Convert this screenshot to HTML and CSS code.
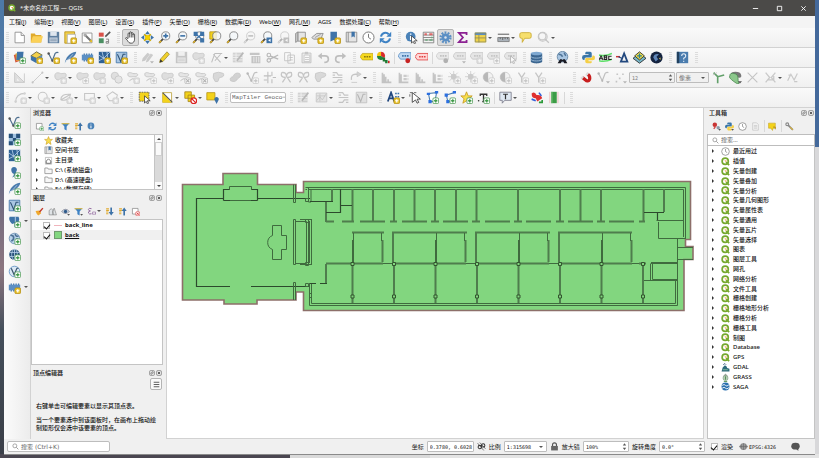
FILE: index.html
```html
<!DOCTYPE html>
<html lang="zh-CN">
<head>
<meta charset="utf-8">
<title>QGIS</title>
<link rel="stylesheet" href="styles.css">
</head>
<body>
<svg class="defs" aria-hidden="true">
  <!-- badges -->
  <symbol id="py" viewBox="0 0 16 16"><rect x="8.500" y="8.500" width="7" height="7" rx="1.500" fill="#e9c22c" stroke="#b58f13"/><path d="M12 10v4M10 12h4" stroke="#fff" stroke-width="1.500"/></symbol>
  <symbol id="pg" viewBox="0 0 16 16"><rect x="8.500" y="8.500" width="7" height="7" rx="1.500" fill="#fff" stroke="#4d9a55"/><path d="M12 10v4M10 12h4" stroke="#3f9a48" stroke-width="1.600"/></symbol>
  <symbol id="xr" viewBox="0 0 16 16"><rect x="8.500" y="8.500" width="7" height="7" rx="1.500" fill="#fff" stroke="#d33"/><path d="M10 10l4 4M14 10l-4 4" stroke="#d22" stroke-width="1.300"/></symbol>
  <symbol id="dd" viewBox="0 0 16 16"><path d="M11 12.500h5l-2.500 3z" fill="#555"/></symbol>
  <!-- project -->
  <symbol id="doc" viewBox="0 0 16 16"><path d="M2.500 1.500h7.500l4 4v9h-11.500z" fill="#fff" stroke="#888"/><path d="M10 1.500v4h4" fill="#eee" stroke="#888"/></symbol>
  <symbol id="folder" viewBox="0 0 16 16"><path d="M1 3h5l1 2h7v9H1z" fill="#e0aa2c"/><path d="M3.500 6.500H16L13.500 14H1z" fill="#fbd157"/></symbol>
  <symbol id="save" viewBox="0 0 16 16"><path d="M1 1h14v14H1z" fill="#5f7f9f"/><path d="M4 1h8v5H4z" fill="#dfe6ee"/><path d="M3 8h10v6H3z" fill="#c9d5e2"/><path d="M4 10h8M4 12h8" stroke="#7b90a6"/></symbol>
  <symbol id="page" viewBox="0 0 16 16"><path d="M1 1h12v14H1z" fill="#f3d04a" stroke="#b58f13"/><path d="M4 4h10v11H4z" fill="#fff" stroke="#aaa"/></symbol>
  <symbol id="mgr" viewBox="0 0 16 16"><path d="M1.500 2.500h12v12h-12z" fill="#fff" stroke="#888"/><path d="M5 5l8 8" stroke="#777" stroke-width="2.500"/><circle cx="5" cy="5" r="2" fill="#aaa"/><path d="M10 13l4 1-1-4z" fill="#e9c22c"/></symbol>
  <symbol id="style" viewBox="0 0 16 16"><path d="M1 2h6v5H1z" fill="#d9534a"/><path d="M1 9h6v6H1z" fill="#4b8f62"/><path d="M9 7l6-6" stroke="#555" stroke-width="2"/><path d="M10 10h3v5h-3v-2h3" stroke="#888" fill="none" stroke-width="1.200"/></symbol>
  <symbol id="hand" viewBox="0 0 16 16"><path d="M5 9V3.500a1 1 0 0 1 2 0V2a1 1 0 0 1 2 0v1a1 1 0 0 1 2 0v1.500a1 1 0 0 1 2 0V10c0 3-1.500 5-4 5S5.500 14 4.500 12L2 9c0-1.300 1.500-1.300 3 .8M7 3.500V8M9 3V8M11 4v4" fill="#fff" stroke="#222" stroke-width=".9"/></symbol>
  <symbol id="pansel" viewBox="0 0 16 16"><path d="M5 5h6v6H5z" fill="#f3d000"/><path d="M8 0l3 4H5zM8 16l3-4H5zM0 8l4-3v6zM16 8l-4-3v6z" fill="#3e73a8"/><path d="M4 4l2 2M12 4l-2 2M4 12l2-2M12 12l-2-2" stroke="#c9a800" stroke-width="2"/></symbol>
  <symbol id="lens" viewBox="0 0 16 16"><path d="M6.500 9.500L1.500 14.500" stroke="#444" stroke-width="2.200"/><path d="M4 12l-2.500 2.500" stroke="#e0b22a" stroke-width="2"/><circle cx="9.500" cy="6" r="5" fill="#f4f7fa" fill-opacity=".8" stroke="#777"/></symbol>
  <symbol id="inc" viewBox="0 0 16 16"><path d="M9.500 3v6M6.500 6h6" stroke="#3e73a8" stroke-width="2"/></symbol>
  <symbol id="dec" viewBox="0 0 16 16"><path d="M6.500 6h6" stroke="#3e73a8" stroke-width="2"/></symbol>
  <symbol id="full" viewBox="0 0 16 16"><path d="M2 1h5v5H2zM10 1h5v5h-5zM10 9h5v5h-5z" fill="#3e73a8"/><path d="M5 4l7 6M12 4L6 9" stroke="#3e73a8" stroke-width="1.500"/></symbol>
  <symbol id="ysq" viewBox="0 0 16 16"><path d="M1 1h8v9H1z" fill="#f3d21a" stroke="#b8961a"/></symbol>
  <symbol id="back" viewBox="0 0 16 16"><path d="M8 8h7v7H8z" fill="#3e73a8"/><path d="M13 9.500L10 11.500l3 2z" fill="#fff"/></symbol>
  <symbol id="map" viewBox="0 0 16 16"><path d="M2 3l3-2v11l-3 2z" fill="#ccc" stroke="#888"/><path d="M5 1.500h9v11H5z" fill="#e5e5e5" stroke="#888"/></symbol>
  <symbol id="map3" viewBox="0 0 16 16"><path d="M1 8l6-5h8l-3 7H3z" fill="#ddd" stroke="#888"/><path d="M5 8l7-4" stroke="#999"/></symbol>
  <symbol id="bm" viewBox="0 0 16 16"><path d="M3 1h8v12l-4-2-4 2z" fill="#3e73a8"/></symbol>
  <symbol id="bms" viewBox="0 0 16 16"><path d="M1.500 1.500h13v12h-13z" fill="#e5e5e5" stroke="#888"/><path d="M4 1.500v12" stroke="#888"/><path d="M8 1h4v7l-2-1.500L8 8z" fill="#3e73a8"/></symbol>
  <symbol id="clock" viewBox="0 0 16 16"><circle cx="8" cy="8" r="6.800" fill="#fff" stroke="#777" stroke-width="1.200"/><path d="M8 3.500V8l3 2" fill="none" stroke="#777" stroke-width="1.200"/></symbol>
  <symbol id="refresh" viewBox="0 0 16 16"><path d="M2.500 7A5.500 5.500 0 0 1 12 4M13.500 9A5.500 5.500 0 0 1 4 12" fill="none" stroke="#3e82c4" stroke-width="2.500"/><path d="M15 1v6H9zM1 15V9h6z" fill="#3e82c4"/></symbol>
  <symbol id="info" viewBox="0 0 16 16"><circle cx="7" cy="7" r="6" fill="#4a82b8"/><path d="M7 6v5M7 3v1.500" stroke="#fff" stroke-width="1.800"/></symbol>
  <symbol id="cur" viewBox="0 0 16 16"><path d="M8 6l7 6h-3.500l1.500 3-1.500.8-1.500-3L8 15z" fill="#fff" stroke="#333" stroke-width=".9"/></symbol>
  <symbol id="abacus" viewBox="0 0 16 16"><path d="M1.500 1.500h13v13h-13zM1.500 5h13M1.500 8h13M1.500 11h13" fill="none" stroke="#777"/><path d="M3 4h3M9 4h4" stroke="#d66" stroke-width="2.400"/><path d="M4 11h3M11 8h2M9 11h4" stroke="#6ba67c" stroke-width="2"/></symbol>
  <symbol id="gear" viewBox="0 0 16 16"><circle cx="8" cy="8" r="6" fill="none" stroke="#5b8fc4" stroke-width="3" stroke-dasharray="2.200 1.570"/><circle cx="8" cy="8" r="4.800" fill="#5b8fc4"/><circle cx="8" cy="8" r="1.500" fill="#dfe6ee"/></symbol>
  <symbol id="sigma" viewBox="0 0 16 16"><path d="M13 5V2.200H3.500L8.500 8l-5 5.800H13V11" fill="none" stroke="#8c2292" stroke-width="2.200"/></symbol>
  <symbol id="table" viewBox="0 0 16 16"><path d="M1 2h14v12H1z" fill="#f0d34a"/><path d="M1 2h14v3H1z" fill="#5b8fc4"/><path d="M1 8.500h14M6 5v9" stroke="#8c8a5a"/><path d="M1.500 2.500h13v11h-13z" fill="none" stroke="#8c8a5a"/></symbol>
  <symbol id="ruler" viewBox="0 0 16 16"><path d="M1 4h14" stroke="#777" stroke-width="1.500"/><path d="M1 8h14v5H1z" fill="#aab2ba" stroke="#777"/><path d="M4 8v2M7 8v3M10 8v2M13 8v2" stroke="#555"/></symbol>
  <symbol id="tip" viewBox="0 0 16 16"><path d="M3 2h10q2 0 2 2v3q0 2-2 2H7l-3 5V9H3Q1 9 1 7V4q0-2 2-2z" fill="#f6df6e" stroke="#c7a72c"/></symbol>
  <!-- data sources -->
  <symbol id="layers" viewBox="0 0 16 16"><path d="M1 5l8-3 2 9-8 3z" fill="#d2553b"/><path d="M3 3l8-1 1 9-8 1z" fill="#e8b53a"/><path d="M5 1h8l-1 10H4z" fill="#3e73a8"/></symbol>
  <symbol id="box" viewBox="0 0 16 16"><path d="M1 6l7-5 7 4-7 4z" fill="#f3d04a" stroke="#5a5a3a"/><path d="M1 6l7 3v6l-7-4z" fill="#3e73a8"/><path d="M8 9l7-4v6l-7 4z" fill="#5b8fc4"/></symbol>
  <symbol id="vec" viewBox="0 0 16 16"><path d="M2 3l4.500 9L10 3q2-2 4-1" fill="none" stroke="#4e6f8f" stroke-width="1.400"/><circle cx="2" cy="3" r="1.500" fill="#555"/><circle cx="6.500" cy="12" r="1.300" fill="#555"/></symbol>
  <symbol id="feather" viewBox="0 0 16 16"><path d="M1 15C2 9 6 2 15 1c0 4-5 9-12 10z" fill="#4a7cae"/><path d="M1 15L11 4" stroke="#d8e4f0" stroke-width=".8"/></symbol>
  <symbol id="chip" viewBox="0 0 16 16"><path d="M4 3v10M7 3v10M10 3v10M13 3v10" stroke="#3e73a8" stroke-width="1.500"/><path d="M1 4.500h14v7H1z" fill="#5b8fc4"/></symbol>
  <symbol id="mesh" viewBox="0 0 16 16"><path d="M1 1h14v14H1z" fill="#2f6296"/><path d="M1 5l6 4 8-8M7 9l2 6M7 9L5 1M1 12l6-3 8 1M11 1l1 9" stroke="#b9d2ea" fill="none"/></symbol>
  <symbol id="vsq" viewBox="0 0 16 16"><path d="M1.500 1.500h13v13h-13z" fill="#a9c6e2" stroke="#3e73a8"/><path d="M3 4l4 9 3-9h3" fill="none" stroke="#2f5376" stroke-width="1.300"/></symbol>
  <symbol id="raster" viewBox="0 0 16 16"><path d="M1 1h14v14H1z" fill="#9fc0e0"/><path d="M1 1h5v5H1zM10 1h5v5h-5zM6 6h4v4H6zM1 10h5v5H1z" fill="#28527c"/></symbol>
  <symbol id="comma" viewBox="0 0 16 16"><path d="M4 4a3.500 3.500 0 1 1 6 3c0 4-2 6-5 7 2-2 2.500-3 2-4.500C5 9 4 7 4 4z" fill="#3e73a8"/></symbol>
  <symbol id="pg-db" viewBox="0 0 16 16"><path d="M2 2h11q2 3 0 7l-2 1v5H8v-5l-3 1Q0 6 2 2z" fill="#3e73a8"/><path d="M9 2v7" stroke="#cfe0f0"/></symbol>
  <symbol id="globe" viewBox="0 0 16 16"><circle cx="8" cy="8" r="6.500" fill="#b9d2ea" stroke="#6b8fb3"/><path d="M3 4q4 0 4 3t-3 4M9 2q0 4 4 3M10 9q3-1 3 3" fill="none" stroke="#4e7397" stroke-width="2"/></symbol>
  <symbol id="globeg" viewBox="0 0 16 16"><circle cx="8" cy="8" r="6.500" fill="#28527c"/><path d="M2 5.500h12M2 10.500h12M8 1.500v13" stroke="#b9d2ea" fill="none"/><ellipse cx="8" cy="8" rx="3.500" ry="6.500" fill="none" stroke="#b9d2ea"/></symbol>
  <symbol id="globev" viewBox="0 0 16 16"><circle cx="8" cy="8" r="6.500" fill="#dce9f5" stroke="#5b8fc4"/><path d="M4 4l3.500 8L11 4h2" fill="none" stroke="#3b556f" stroke-width="1.500"/></symbol>
  <!-- editing -->
  <symbol id="pencil" viewBox="0 0 16 16"><path d="M2 14l1-4 8-9 3 3-8 9z" fill="#f0d02c" stroke="#8a7a2a" stroke-width=".8"/><path d="M2 14l1-4 3 3z" fill="#333"/></symbol>
  <symbol id="pencils" viewBox="0 0 16 16"><path d="M1 13l1-4 6-7 3 2-6 8zM6 14l1-4 5-7 3 2-6 8z" fill="#888"/></symbol>
  <symbol id="blob" viewBox="0 0 16 16"><path d="M1 6c0-5 5-4 7-3s7-2 7 2-4 4-6 4-2 2-4 2-4-2-4-5z" fill="#a5bfa5" stroke="#777"/></symbol>
  <symbol id="blob2" viewBox="0 0 16 16"><path d="M1 4c0-3 4-2 6-1s5-1 6 1-2 3-5 3-7 1-7-3zM3 12q4-4 6-2" fill="#ccc" stroke="#777" stroke-width="1.200"/></symbol>
  <symbol id="blob3" viewBox="0 0 16 16"><path d="M2 3q6-3 12 0 2 4-4 5-2 0-2 3t-4 2Q0 8 2 3z" fill="#aaa" stroke="#777"/></symbol>
  <symbol id="blob4" viewBox="0 0 16 16"><path d="M2 12q-2-4 3-5 2-6 8-4 3 4-2 6-3 6-9 3z" fill="#999" stroke="#777"/></symbol>
  <symbol id="node" viewBox="0 0 16 16"><path d="M2 14L6 3h9M4 4l9 10M13 4L6 12" fill="none" stroke="#666" stroke-width="1.300"/></symbol>
  <symbol id="trim" viewBox="0 0 16 16"><path d="M6 1v14M11 1v5M11 10v5M1 6h9M1 11h4M12 8h4" fill="none" stroke="#666" stroke-width="1.300"/></symbol>
  <symbol id="form" viewBox="0 0 16 16"><path d="M1 2h12v12H1z" fill="#999"/><path d="M1 5h12M1 8h12M1 11h12M5 2v12" stroke="#eee"/><path d="M6 12l8-10" stroke="#555" stroke-width="2"/></symbol>
  <symbol id="trash" viewBox="0 0 16 16"><path d="M1 2h12v3H1zM3 6h11v9H3z" fill="#b66"/><path d="M6 7v7M9 7v7M12 7v7" stroke="#eee"/></symbol>
  <symbol id="cut" viewBox="0 0 16 16"><path d="M5 6l10 4M5 10l10-5" stroke="#555" stroke-width="1.500"/><circle cx="3.500" cy="5" r="2.200" fill="none" stroke="#555" stroke-width="1.400"/><circle cx="3.500" cy="11.500" r="2.200" fill="none" stroke="#555" stroke-width="1.400"/></symbol>
  <symbol id="copy" viewBox="0 0 16 16"><path d="M2 2h7v10H2zM6 5h8v10H6z" fill="#fff" stroke="#666"/><path d="M8 8h4M8 11h4" stroke="#666"/></symbol>
  <symbol id="paste" viewBox="0 0 16 16"><path d="M2.500 2.500h11v12h-11z" fill="#ddd" stroke="#666"/><path d="M5 5h7v8H5z" fill="#fff" stroke="#777"/><path d="M6 1h4v3H6z" fill="#777"/><path d="M6 8h5M6 10.500h5" stroke="#777"/></symbol>
  <symbol id="report" viewBox="0 0 16 16"><path d="M3 1.500h7l3 3v10H3z" fill="#fff" stroke="#555"/><path d="M5 6h6M5 8.500h6M5 11h6" stroke="#555"/></symbol>
  <symbol id="undo" viewBox="0 0 16 16"><path d="M5 6h5q4 0 4 4t-5 4" fill="none" stroke="#666" stroke-width="2"/><path d="M1 6l5-4v8z" fill="#666"/></symbol>
  <symbol id="redo" viewBox="0 0 16 16"><path d="M11 6H6q-4 0-4 4t5 4" fill="none" stroke="#666" stroke-width="2"/><path d="M15 6l-5-4v8z" fill="#666"/></symbol>
  <symbol id="tagy" viewBox="0 0 16 16"><path d="M0 7l3-4h13v8H3z" fill="#f5d81e" stroke="#b99b12" stroke-width=".8"/><path d="M5 7h8" stroke="#8a7610" stroke-width="2" stroke-dasharray="2 1"/></symbol>
  <symbol id="tagb" viewBox="0 0 16 16"><path d="M0 6l3-4h13v8H3z" fill="#bfd8f2" stroke="#5b8fc4"/><path d="M5 6h9" stroke="#3e73a8" stroke-width="2" stroke-dasharray="2 1"/><circle cx="12" cy="12" r="3" fill="#c62222"/></symbol>
  <symbol id="tag" viewBox="0 0 16 16"><path d="M0 6l3-4h13v8H3z" fill="#ccc" stroke="#777"/><path d="M5 6h9" stroke="#777" stroke-width="2" stroke-dasharray="2 1"/></symbol>
  <symbol id="tagr" viewBox="0 0 16 16"><path d="M0 7l3-4h13v8H3z" fill="#ffd5d5" stroke="#e04040"/><path d="M5 7h9" stroke="#e04040" stroke-width="2" stroke-dasharray="2 1"/></symbol>
  <symbol id="pie" viewBox="0 0 16 16"><path d="M0 6a5 5 0 0 1 5-5v5z" fill="#f2c40f"/><path d="M5 1a5 5 0 0 1 4 8L5 6z" fill="#d92b2b"/><path d="M0 6h5l4 3A5 5 0 0 1 0 6z" fill="#25843b"/><path d="M8.500 13V8M11.500 15v-4" stroke="#1e7a32" stroke-width="3"/><path d="M14.500 15v-3" stroke="#c22" stroke-width="2"/></symbol>
  <symbol id="db" viewBox="0 0 16 16"><path d="M1 3v10c0 3 14 3 14 0V3z" fill="#3c6690"/><ellipse cx="8" cy="3" rx="7" ry="2.200" fill="#7fa8d0"/><path d="M1 6.500c0 3 14 3 14 0M1 10c0 3 14 3 14 0" fill="none" stroke="#a9c6e2"/></symbol>
  <symbol id="binoc" viewBox="0 0 16 16"><circle cx="8" cy="7" r="6.500" fill="#a9c6e2" stroke="#5d7f9f"/><path d="M3 4q4 0 5 3M10 2l2 4" stroke="#4e7397" stroke-width="1.800" fill="none"/><path d="M5 10h2l1 1 1-1h2l3 5h-4l-1-2H7l-1 2H2z" fill="#1a1a22"/></symbol>
  <symbol id="python" viewBox="0 0 16 16"><path d="M5 1h5q2 0 2 2v4q0 1-1 1H5q-2 0-2 3H2Q0 11 0 8q0-3 3-3h5V4H4V2z" fill="#3a76a8"/><path d="M11 15H6q-2 0-2-2V9.500q0-1 1-1h6q2 0 2-3h1q2 0 2 3 0 3-3 3H8v1h4v1.500z" fill="#f5cf45"/></symbol>
  <symbol id="label" viewBox="0 0 16 16"><path d="M0 5q8 2 16-2M0 12q8 2 16-2" stroke="#5fe06a" stroke-width="2" fill="none"/><path d="M0 11l2.500-5L5 11M1 9.500h3M6.500 6h3v4.500h-3zM6.500 8.200h3M15.500 6.500H12v4h3.500" stroke="#222" stroke-width="1.300" fill="none"/></symbol>
  <symbol id="adel" viewBox="0 0 16 16"><path d="M6 13l4-10 4 10z" fill="none" stroke="#22487e" stroke-width="2.200"/><path d="M0 7h5" stroke="#c33" stroke-width="1.800"/><path d="M3 7l4 2" stroke="#22487e" stroke-width="1.500"/></symbol>
  <symbol id="diam" viewBox="0 0 16 16"><path d="M0 9l8-6 8 6-8 6z" fill="#79b7c9" stroke="#222"/><path d="M2 6l6-5 6 5-6 5z" fill="#f3e04a" stroke="#222"/><path d="M8 3v6M5 6h6" stroke="#2f7f94" stroke-width="1.600"/></symbol>
  <symbol id="ball" viewBox="0 0 16 16"><circle cx="8" cy="8" r="7.500" fill="#14233f"/><path d="M4 8q1-5 7-4l-3 3 2 3-3 3z" fill="#5f86b8"/><path d="M11 9l2-1v3z" fill="#d8c25a"/></symbol>
  <symbol id="book" viewBox="0 0 16 16"><path d="M1 1h14v14H1z" fill="#4a7cae"/><path d="M1 1h3v14H1z" fill="#22405e"/><path d="M7 6q0-2.500 2.500-2.500T12 6q0 1.500-2.500 3v1.500M9.500 12v1.500" fill="none" stroke="#e4eef8" stroke-width="1.300"/></symbol>
  <!-- advanced digitizing -->
  <symbol id="tri" viewBox="0 0 16 16"><path d="M2 2l12 12H2z" fill="#bbb" stroke="#777"/><path d="M5 9l3 3H5z" fill="#f4f4f4"/><path d="M14 3v11" stroke="#777"/></symbol>
  <symbol id="line" viewBox="0 0 16 16"><path d="M2 14L14 2" stroke="#777"/><circle cx="2" cy="14" r="1.300" fill="#777"/><circle cx="14" cy="2" r="1.300" fill="#777"/></symbol>
  <symbol id="mergec" viewBox="0 0 16 16"><circle cx="6" cy="6" r="4.500" fill="#bbb" stroke="#777"/><circle cx="10.500" cy="10.500" r="4.500" fill="#ccc" stroke="#777"/></symbol>
  <symbol id="loops" viewBox="0 0 16 16"><path d="M2 2q6-1 6 5 0-6 6-5 2 6-5 6l4 6M7 8l-4 6M2 2q-2 6 5 6" fill="none" stroke="#777" stroke-width="1.600"/></symbol>
  <symbol id="rows" viewBox="0 0 16 16"><path d="M2 2h5l2 3h5M2 8h12M2 14h5l2-3h5M2 5h3M11 14h3" fill="none" stroke="#777" stroke-width="1.400"/></symbol>
  <symbol id="rot" viewBox="0 0 16 16"><path d="M11 4H8q-6 0-5 7" fill="none" stroke="#777" stroke-width="1.600"/><path d="M10 1l5 3-5 3zM3 14h7" fill="#999" stroke="#777"/></symbol>
  <symbol id="hist" viewBox="0 0 16 16"><path d="M3 2v12h11M5 4v10M7 7v7M10 10v4" fill="none" stroke="#777" stroke-width="2"/></symbol>
  <symbol id="hista" viewBox="0 0 16 16"><path d="M3 2v12h11M5 4v10" fill="none" stroke="#777" stroke-width="2"/><path d="M8 6h6M8 10h6" stroke="#888" stroke-width="3" stroke-dasharray="4 1"/></symbol>
  <symbol id="sun" viewBox="0 0 16 16"><circle cx="7" cy="7" r="3.500" fill="#998a4a"/><path d="M7 0v14M0 7h14M2 2l10 10M12 2L2 12" stroke="#998a4a"/></symbol>
  <symbol id="half" viewBox="0 0 16 16"><circle cx="7.500" cy="7.500" r="6" fill="#eee" stroke="#777"/><path d="M7.500 1.500a6 6 0 0 0 0 12z" fill="#555"/></symbol>
  <symbol id="why" viewBox="0 0 16 16"><path d="M3 2l4 6 4-6M7 8v6" fill="none" stroke="#777" stroke-width="1.600"/></symbol>
  <symbol id="magnet" viewBox="0 0 16 16"><path d="M3 8l5 4q4 1 4-3t-3-5" fill="none" stroke="#c81e1e" stroke-width="4"/><path d="M1.500 9.500L4 6.500M7.500 5.500L10 2" stroke="#ddd" stroke-width="2.500"/></symbol>
  <symbol id="dots" viewBox="0 0 16 16"><path d="M3 3h2v2H3zM10 3h2v2h-2zM6 8h2v2H6zM2 12h2v2H2z" fill="#777"/></symbol>
  <symbol id="topo" viewBox="0 0 16 16"><path d="M2 2l5 5v8M7 7l8-2" fill="none" stroke="#62a06a" stroke-width="2"/><path d="M1 5l5-3" stroke="#bbb"/></symbol>
  <symbol id="overlap" viewBox="0 0 16 16"><path d="M2 5q0-4 6-4t7 4-4 3-2 5z" fill="#777"/><path d="M1 6q0-4 5-3t5 5 1 7-6-2-5-7z" fill="#8cc88c" stroke="#4d8a52"/></symbol>
  <symbol id="cross" viewBox="0 0 16 16"><path d="M2 2l12 12M14 2L2 14" stroke="#777" stroke-width="1.400"/></symbol>
  <symbol id="bow" viewBox="0 0 16 16"><path d="M2 2l5 6-5 6M14 2L9 8l5 6M4 11h8V6" fill="none" stroke="#8a8470" stroke-width="1.600"/></symbol>
  <symbol id="zig" viewBox="0 0 16 16"><path d="M2 12l4-8 4 7 4-8M3 5h4M10 13h4" fill="none" stroke="#8a8470" stroke-width="1.500"/></symbol>
  <!-- shapes and selection -->
  <symbol id="arc" viewBox="0 0 16 16"><path d="M2 14Q2 3 14 3" fill="none" stroke="#777" stroke-width="1.400"/><circle cx="2" cy="13" r="1.500" fill="#999"/><circle cx="13" cy="3" r="1.500" fill="#999"/></symbol>
  <symbol id="circ" viewBox="0 0 16 16"><circle cx="7" cy="7" r="5.500" fill="#f6f6f6" stroke="#777" stroke-width="1.300"/></symbol>
  <symbol id="ell" viewBox="0 0 16 16"><path d="M1 11q0-8 12-7-1 9-12 7M1 11L13 4" fill="none" stroke="#777" stroke-width="1.300"/></symbol>
  <symbol id="rct" viewBox="0 0 16 16"><path d="M2 3h12v8H2z" fill="none" stroke="#777" stroke-width="1.300"/></symbol>
  <symbol id="poly" viewBox="0 0 16 16"><path d="M8 1l6 4-2 7H4L1 6z" fill="none" stroke="#777" stroke-width="1.300"/></symbol>
  <symbol id="sel" viewBox="0 0 16 16"><path d="M1.500 1.500h12v11h-12z" fill="#f3d21a" stroke="#555" stroke-dasharray="2 1"/></symbol>
  <symbol id="selv" viewBox="0 0 16 16"><path d="M2 2h11v12H2z" fill="#fff" stroke="#bba23a"/><path d="M2 2v12h11z" fill="#f3d21a"/><path d="M2 2l12 12" stroke="#555" stroke-width="1.400"/></symbol>
  <symbol id="desel" viewBox="0 0 16 16"><path d="M1 1h8v8H1zM5 5h8v8H5z" fill="#f3d21a" stroke="#a5841a"/><circle cx="12" cy="12" r="3.500" fill="#fff" stroke="#d22" stroke-width="1.500"/><path d="M9.500 9.500l5 5" stroke="#d22" stroke-width="1.400"/></symbol>
  <symbol id="selloc" viewBox="0 0 16 16"><path d="M1 2h10v9H1z" fill="#f3d21a" stroke="#b8961a"/><path d="M13 16l-2.500-5a2.700 2.700 0 1 1 5 0z" fill="#3e73a8"/></symbol>
  <symbol id="wide" viewBox="0 0 16 16"><path d="M1.500 2.500h13v11h-13z" fill="#ccc" stroke="#777"/><path d="M2 12l4-5 3 4 5-8M2 6h11M6 3v10" fill="none" stroke="#777"/></symbol>
  <symbol id="annoA" viewBox="0 0 16 16"><path d="M1 13L5 2l4 11M2.500 9h5" fill="none" stroke="#22487e" stroke-width="2.200"/><path d="M10 3h6M10 7h5" stroke="#3e73a8" stroke-width="2" stroke-dasharray="2 1"/></symbol>
  <symbol id="sela" viewBox="0 0 16 16"><path d="M1 2h3M6 2h3M1 4v3" stroke="#555"/><path d="M4 2l10 8h-4l2 4-2 1-2-4-4 3z" fill="#fff" stroke="#333"/></symbol>
  <symbol id="apoly" viewBox="0 0 16 16"><path d="M3 3l10-1-2 11-6 0z" fill="#fff" stroke="#4a7cae" stroke-width="1.300"/><path d="M1 2h4v3H1zM11 0h4v3h-4zM3 11h4v4H3z" fill="#2c6fe0"/></symbol>
  <symbol id="aline" viewBox="0 0 16 16"><path d="M14 2L4 5l2 8h6" fill="none" stroke="#4a7cae" stroke-width="1.300"/><path d="M12 0h4v3h-4zM2 3h4v4H2zM4 11h4v4H4z" fill="#2c6fe0"/></symbol>
  <symbol id="star" viewBox="0 0 16 16"><path d="M8 1l2 5h5l-4 3.500 1.500 5.500L8 12l-4.500 3L5 9.500 1 6h5z" fill="#f8de4e" stroke="#c79a1c"/></symbol>
  <symbol id="tee" viewBox="0 0 16 16"><path d="M4 6V4h8v2M8 4v9M6.500 13h3" fill="none" stroke="#333" stroke-width="1.600"/><circle cx="2" cy="12" r="1" fill="#333"/></symbol>
  <symbol id="tbox" viewBox="0 0 16 16"><path d="M1 1.500h14v10H7l-3 3.500v-3.500H1z" fill="#dfe8f2" stroke="#778"/><path d="M5 4h6M8 4v6" stroke="#333" stroke-width="1.500"/></symbol>
  <symbol id="redblue" viewBox="0 0 16 16"><path d="M2 3q4-3 6 2 6-1 7 4l-6 4-2-4q-5 0-5-6z" fill="#e03030"/><path d="M2 10l5 2M11 2l3 4" stroke="#3160d8" stroke-width="2"/><path d="M11 14h4v-3" stroke="#2b9a3a" stroke-width="2" fill="none"/></symbol>
  <symbol id="green" viewBox="0 0 16 16"><path d="M5 1h7v14H5z" fill="#3c9c46"/><path d="M6 1v14" stroke="#8ed08e"/><path d="M3.500 1v14M13.500 1v14" stroke="#e8a0a0" stroke-width=".8"/></symbol>
  <!-- panel tools -->
  <symbol id="sq" viewBox="0 0 16 16"><path d="M2.500 2.500h10v10h-10z" fill="#fff" stroke="#888" stroke-width="1.300"/></symbol>
  <symbol id="funnel" viewBox="0 0 16 16"><path d="M1 2h14l-5 6v7l-4-2V8z" fill="#3e82c4"/><path d="M1 2h14v2H1z" fill="#d9b84a"/></symbol>
  <symbol id="updn" viewBox="0 0 16 16"><path d="M2 3h5M2 6h5M2 9h4M2 12h4" stroke="#e0a92c" stroke-width="1.800"/><path d="M11 15V6" stroke="#3e73a8" stroke-width="3"/><path d="M6.500 7L11 1l4.500 6z" fill="#3e73a8"/></symbol>
  <symbol id="dnup" viewBox="0 0 16 16"><path d="M2 3h5M2 6h5M2 9h4M2 12h4" stroke="#e0a92c" stroke-width="1.800"/><path d="M11 1v9" stroke="#3e73a8" stroke-width="3"/><path d="M6.500 9l4.500 6 4.500-6z" fill="#3e73a8"/></symbol>
  <symbol id="brush" viewBox="0 0 16 16"><path d="M1 7l7-1 3 5-5 4q-3-1-5-8z" fill="#f0a92c"/><path d="M8 9l6-7" stroke="#c23a2a" stroke-width="2.500"/></symbol>
  <symbol id="group" viewBox="0 0 16 16"><path d="M2 14V6l4-3 3 3v8zM8 8l3-6 4 12H9z" fill="#dfe3e6" stroke="#777"/></symbol>
  <symbol id="eye" viewBox="0 0 16 16"><path d="M1 8q7-8 14 0-7 7-14 0z" fill="#cfdbe6" stroke="#667"/><circle cx="8" cy="8" r="3" fill="#2f5a8a"/></symbol>
  <symbol id="eps" viewBox="0 0 16 16"><path d="M8 3Q3 1 2.500 4.500 3 7 6 7 2 7.500 2.500 10.500 4 13.500 8 12M11 8q-2 3 0 6M14 8q2 3 0 6" fill="none" stroke="#8b5f9a" stroke-width="1.600"/></symbol>
  <symbol id="home" viewBox="0 0 16 16"><path d="M2.500 2.500h11v12h-11z" fill="#fff" stroke="#999"/><path d="M4 9l4-4 4 4v4H4z" fill="none" stroke="#555" stroke-width="1.400"/></symbol>
  <symbol id="fold" viewBox="0 0 16 16"><path d="M1.500 3.500h5l1 2h7v8h-13z" fill="#f7f7f7" stroke="#888" stroke-width="1.300"/></symbol>
  <symbol id="q" viewBox="0 0 16 16"><circle cx="7.500" cy="7.500" r="5.500" fill="#fff" stroke="#76a82e" stroke-width="3"/><path d="M9 9l5.500 5.500" stroke="#76a82e" stroke-width="3"/><path d="M6 6h4l-1 3z" fill="#f08a24"/></symbol>
  <symbol id="models" viewBox="0 0 16 16"><circle cx="5" cy="5" r="4" fill="#c93434"/><circle cx="11" cy="10" r="3" fill="#8a9aaa"/><path d="M3 12l3-3" stroke="#c93434" stroke-width="2"/></symbol>
  <symbol id="wrench" viewBox="0 0 16 16"><path d="M5 5l9 9" stroke="#888" stroke-width="3"/><circle cx="4" cy="4" r="2.500" fill="none" stroke="#888" stroke-width="2"/><path d="M9 9l5 5" stroke="#d8b13a" stroke-width="2"/></symbol>
  <symbol id="note" viewBox="0 0 16 16"><path d="M1 2h12v9H9l-1 4-3-4H1z" fill="#f3d21a" stroke="#c5a21a"/><path d="M9 9h4v4" stroke="#b08a1a" fill="none" stroke-width="1.500"/></symbol>
  <symbol id="gdal" viewBox="0 0 16 16"><path d="M1 15L3 8l4-4 3 2 1 3 4 1v5z" fill="#2d6a7a"/><path d="M4 3l3-2 2 2" stroke="#357" fill="none" stroke-width="1.600"/><path d="M3 12h9" stroke="#8fc7a0" stroke-width="1.500"/></symbol>
  <symbol id="grass" viewBox="0 0 16 16"><path d="M8 1L3 6h10z" fill="#9aa39a"/><circle cx="8" cy="9" r="4.500" fill="#b9cdb9" stroke="#7a9a7a"/><path d="M8 6v6M5 15h6" stroke="#4b8f4b" stroke-width="1.600"/></symbol>
  <symbol id="saga" viewBox="0 0 16 16"><circle cx="8" cy="8" r="7" fill="#2a6fae"/><path d="M2 6q4-3 6 0t6-1M2 11q4-3 6 0t6-1" fill="none" stroke="#fff" stroke-width="1.600"/></symbol>
  <symbol id="mag" viewBox="0 0 16 16"><circle cx="6.500" cy="6.500" r="4.500" fill="none" stroke="#777" stroke-width="1.400"/><path d="M10 10l4.500 4.500" stroke="#777" stroke-width="1.600"/></symbol>
  <symbol id="float" viewBox="0 0 16 16"><rect x="1.500" y="1.500" width="13" height="13" rx="3" fill="#e8e8e8" stroke="#666" stroke-width="1.500"/><path d="M5 11V8l3-3h3v3l-3 3z" fill="none" stroke="#555" stroke-width="1.500"/></symbol>
  <symbol id="close" viewBox="0 0 16 16"><rect x="1.500" y="1.500" width="13" height="13" rx="3" fill="#e8e8e8" stroke="#666" stroke-width="1.500"/><path d="M5 5l6 6M11 5l-6 6" stroke="#333" stroke-width="2"/></symbol>
  <symbol id="burger" viewBox="0 0 16 16"><path d="M3 4h10M3 8h10M3 12h10" stroke="#444" stroke-width="1.500"/></symbol>
  <symbol id="updown" viewBox="0 0 8 16"><path d="M1 6l3-4 3 4zM1 10l3 4 3-4z" fill="#555"/></symbol>
  <symbol id="lock" viewBox="0 0 16 16"><path d="M4.500 8V5a3.500 3.500 0 0 1 7 0v3" fill="none" stroke="#555" stroke-width="2"/><path d="M2 7h12v8H2z" fill="#666"/></symbol>
  <symbol id="extent" viewBox="0 0 16 16"><path d="M1 2l11 13M5 1l10 11" stroke="#666" stroke-width="1.500"/><circle cx="5" cy="9" r="3" fill="none" stroke="#333" stroke-width="1.800"/><circle cx="11" cy="6" r="3" fill="none" stroke="#333" stroke-width="1.800"/></symbol>
  <symbol id="crs" viewBox="0 0 16 16"><path d="M0 8l5-6h6l5 6-5 6H5z" fill="#999"/><path d="M1 8h14M8 2v12M4 4v8M12 4v8" stroke="#666"/></symbol>
  <symbol id="chat" viewBox="0 0 16 16"><ellipse cx="8" cy="7.500" rx="7.500" ry="6" fill="#555"/><path d="M8 11l5 5v-6z" fill="#555"/></symbol>
</svg>

<main class="window">
  <header class="titlebar">
    <svg class="logo"><use href="#q"/></svg>
    <h1>*未命名的工程 — QGIS</h1>
    <div class="winbtns">
      <button aria-label="最小化"><svg viewBox="0 0 8 8"><path d="M1 4h6"/></svg></button>
      <button aria-label="最大化"><svg viewBox="0 0 8 8"><path d="M1.500 1.500h5v5h-5z"/></svg></button>
      <button aria-label="关闭"><svg viewBox="0 0 8 8"><path d="M1.500 1.500l5 5M6.500 1.500l-5 5"/></svg></button>
    </div>
  </header>

  <nav class="menubar">
    <button>工程(<u>J</u>)</button><button>编辑(<u>E</u>)</button><button>视图(<u>V</u>)</button><button>图层(<u>L</u>)</button><button>设置(<u>S</u>)</button><button>插件(<u>P</u>)</button><button>矢量(<u>O</u>)</button><button>栅格(<u>R</u>)</button><button>数据库(<u>D</u>)</button><button>Web(<u>W</u>)</button><button>网孔(<u>M</u>)</button><button>AGIS</button><button>数据处理(<u>C</u>)</button><button>帮助(<u>H</u>)</button>
  </nav>

  <div class="toolbar">
    <div class="group">
      <button aria-label="新建"><svg><use href="#doc"/></svg></button>
      <button aria-label="打开"><svg><use href="#folder"/></svg></button>
      <button aria-label="保存"><svg><use href="#save"/></svg></button>
      <button aria-label="新建布局"><svg><use href="#page"/><use href="#py"/></svg></button>
      <button aria-label="布局管理"><svg><use href="#mgr"/></svg></button>
      <button aria-label="样式管理"><svg><use href="#style"/></svg></button>
    </div>
    <div class="group">
      <button class="on" aria-label="平移"><svg><use href="#hand"/></svg></button>
      <button aria-label="平移到所选"><svg><use href="#pansel"/></svg></button>
      <button aria-label="放大"><svg><use href="#lens"/><use href="#inc"/></svg></button>
      <button aria-label="缩小"><svg><use href="#lens"/><use href="#dec"/></svg></button>
      <button aria-label="全图"><svg><use href="#lens"/><use href="#full"/></svg></button>
      <button aria-label="缩放到所选"><svg><use href="#ysq"/><use href="#lens"/></svg></button>
      <button aria-label="缩放到图层"><svg><use href="#lens"/></svg></button>
      <button disabled aria-label="原始分辨率"><svg><use href="#lens"/><use href="#dec"/></svg></button>
      <button aria-label="上一视图"><svg><use href="#lens"/><use href="#back"/></svg></button>
      <button disabled aria-label="下一视图"><svg><use href="#lens"/><use href="#back"/></svg></button>
      <button aria-label="新建地图"><svg><use href="#map"/><use href="#py"/></svg></button>
      <button aria-label="新建三维地图"><svg><use href="#map3"/><use href="#py"/></svg></button>
      <button aria-label="新建书签"><svg><use href="#bm"/><use href="#py"/></svg></button>
      <button aria-label="书签"><svg><use href="#bms"/></svg></button>
      <button aria-label="时间控制"><svg><use href="#clock"/></svg></button>
      <button aria-label="刷新"><svg><use href="#refresh"/></svg></button>
    </div>
    <div class="group">
      <button aria-label="识别"><svg><use href="#info"/><use href="#cur"/></svg></button>
      <button aria-label="字段计算器"><svg><use href="#abacus"/></svg></button>
      <button class="on" aria-label="工具箱"><svg><use href="#gear"/></svg></button>
      <button aria-label="统计"><svg><use href="#sigma"/></svg></button>
      <button class="drop" aria-label="属性表"><svg><use href="#table"/></svg></button>
      <button class="drop" aria-label="测量"><svg><use href="#ruler"/></svg></button>
      <button aria-label="地图提示"><svg><use href="#tip"/></svg></button>
      <button class="drop" disabled aria-label="动作"><svg><use href="#circ"/><use href="#mag"/></svg></button>
    </div>
  </div>

  <div class="toolbar">
    <div class="group">
      <button aria-label="数据源管理"><svg><use href="#layers"/><use href="#pg"/></svg></button>
      <button aria-label="新建GeoPackage"><svg><use href="#box"/><use href="#py"/></svg></button>
      <button aria-label="新建Shapefile"><svg><use href="#vec"/><use href="#py"/></svg></button>
      <button aria-label="新建SpatiaLite"><svg><use href="#feather"/><use href="#py"/></svg></button>
      <button aria-label="新建临时图层"><svg><use href="#chip"/><use href="#py"/></svg></button>
      <button aria-label="新建网孔"><svg><use href="#mesh"/><use href="#py"/></svg></button>
      <button aria-label="新建虚拟图层"><svg><use href="#vsq"/><use href="#py"/></svg></button>
    </div>
    <div class="group">
      <button disabled aria-label="当前编辑"><svg><use href="#pencils"/><use href="#dd"/></svg></button>
      <button aria-label="切换编辑"><svg><use href="#pencil"/></svg></button>
      <button disabled aria-label="保存编辑"><svg><use href="#save"/></svg></button>
      <button disabled aria-label="添加要素"><svg><use href="#blob"/><use href="#py"/></svg></button>
      <button class="drop" disabled aria-label="顶点工具"><svg><use href="#node"/></svg></button>
      <button disabled aria-label="修改属性"><svg><use href="#form"/></svg></button>
      <button disabled aria-label="删除所选"><svg><use href="#trash"/></svg></button>
      <button disabled aria-label="剪切"><svg><use href="#cut"/></svg></button>
      <button disabled aria-label="复制"><svg><use href="#copy"/></svg></button>
      <button disabled aria-label="粘贴"><svg><use href="#paste"/></svg></button>
      <button disabled aria-label="撤销"><svg><use href="#undo"/></svg></button>
      <button disabled aria-label="重做"><svg><use href="#redo"/></svg></button>
    </div>
    <div class="group">
      <button aria-label="标注"><svg><use href="#tagy"/></svg></button>
      <button aria-label="图表"><svg><use href="#pie"/></svg></button>
      <span class="sep"></span>
      <button aria-label="高亮固定标注"><svg><use href="#tagb"/></svg></button>
      <button aria-label="显示未放置标注"><svg><use href="#tagr"/></svg></button>
      <span class="sep"></span>
      <button disabled aria-label="固定标注"><svg><use href="#tagb"/></svg></button>
      <button disabled aria-label="显示隐藏标注"><svg><use href="#tag"/><use href="#dd"/></svg></button>
      <button disabled aria-label="移动标注"><svg><use href="#tag"/><use href="#py"/></svg></button>
      <button disabled aria-label="旋转标注"><svg><use href="#tag"/><use href="#pg"/></svg></button>
      <button disabled aria-label="更改标注"><svg><use href="#tag"/><use href="#cur"/></svg></button>
    </div>
    <div class="group"><button aria-label="数据库管理"><svg><use href="#db"/></svg></button></div>
    <div class="group"><button aria-label="目录搜索"><svg><use href="#binoc"/></svg></button></div>
    <div class="group">
      <button aria-label="Python"><svg><use href="#python"/></svg></button>
      <button aria-label="标签工具"><svg><use href="#label"/></svg></button>
      <button aria-label="AGIS"><svg><use href="#adel"/></svg></button>
      <button aria-label="图层服务"><svg><use href="#diam"/></svg></button>
      <button aria-label="地球"><svg><use href="#ball"/></svg></button>
    </div>
    <div class="group"><button aria-label="帮助"><svg><use href="#book"/></svg></button></div>
    <div class="group"></div>
  </div>

  <div class="toolbar">
    <div class="group">
      <button disabled aria-label="高级数字化"><svg><use href="#tri"/></svg></button>
      <button class="drop" disabled aria-label="线段"><svg><use href="#line"/></svg></button>
      <button class="drop" disabled aria-label="移动要素"><svg><use href="#blob"/><use href="#py"/></svg></button>
      <button disabled aria-label="旋转要素"><svg><use href="#blob"/><use href="#pg"/></svg></button>
      <button disabled aria-label="缩放要素"><svg><use href="#blob"/><use href="#py"/></svg></button>
      <button disabled aria-label="简化要素"><svg><use href="#mergec"/></svg></button>
      <button disabled aria-label="添加环"><svg><use href="#blob2"/><use href="#py"/></svg></button>
      <button disabled aria-label="添加部件"><svg><use href="#blob2"/><use href="#pg"/></svg></button>
      <button disabled aria-label="填充环"><svg><use href="#blob"/><use href="#pg"/></svg></button>
      <button disabled aria-label="删除环"><svg><use href="#blob2"/><use href="#xr"/></svg></button>
      <button disabled aria-label="删除部件"><svg><use href="#blob2"/><use href="#xr"/></svg></button>
      <button disabled aria-label="重塑"><svg><use href="#blob3"/></svg></button>
      <button disabled aria-label="偏移"><svg><use href="#blob4"/></svg></button>
      <button disabled aria-label="反转"><svg><use href="#vec"/><use href="#pg"/></svg></button>
      <button disabled aria-label="修剪"><svg><use href="#trim"/></svg></button>
      <button disabled aria-label="分割要素"><svg><use href="#loops"/></svg></button>
      <button disabled aria-label="分割部件"><svg><use href="#loops"/></svg></button>
      <button disabled aria-label="合并"><svg><use href="#blob3"/></svg></button>
      <button disabled aria-label="合并属性"><svg><use href="#rows"/></svg></button>
      <button class="drop" disabled aria-label="旋转符号"><svg><use href="#rot"/></svg></button>
    </div>
    <div class="group">
      <button disabled aria-label="局部拉伸"><svg><use href="#hist"/></svg></button>
      <button disabled aria-label="全局拉伸"><svg><use href="#hista"/></svg></button>
      <button disabled aria-label="局部累积"><svg><use href="#hist"/></svg></button>
      <button disabled aria-label="全局累积"><svg><use href="#hista"/></svg></button>
      <button disabled aria-label="增加亮度"><svg><use href="#sun"/><use href="#pg"/></svg></button>
      <button disabled aria-label="降低亮度"><svg><use href="#sun"/><use href="#pg"/></svg></button>
      <button disabled aria-label="增加对比度"><svg><use href="#half"/><use href="#pg"/></svg></button>
      <button disabled aria-label="降低对比度"><svg><use href="#half"/><use href="#pg"/></svg></button>
      <button disabled aria-label="增加伽马"><svg><use href="#why"/><use href="#pg"/></svg></button>
      <button disabled aria-label="降低伽马"><svg><use href="#why"/><use href="#pg"/></svg></button>
    </div>
    <div class="group apart">
      <button aria-label="捕捉"><svg><use href="#magnet"/></svg></button>
      <button disabled aria-label="捕捉图层"><svg><use href="#vec"/><use href="#dd"/></svg></button>
      <button disabled aria-label="捕捉类型"><svg><use href="#dots"/><use href="#dd"/></svg></button>
      <label class="spin dim tol"><input type="text" value="12" aria-label="容差"><svg><use href="#updown"/></svg></label>
      <label class="combo dim unit"><select aria-label="单位"><option>像素</option></select></label>
      <button aria-label="拓扑编辑"><svg><use href="#topo"/></svg></button>
      <button aria-label="避免重叠"><svg><use href="#overlap"/><use href="#dd"/></svg></button>
      <button disabled aria-label="交点捕捉"><svg><use href="#cross"/></svg></button>
      <button class="drop" disabled aria-label="追踪"><svg><use href="#bow"/></svg></button>
      <button disabled aria-label="自捕捉"><svg><use href="#zig"/></svg></button>
    </div>
  </div>

  <div class="toolbar">
    <div class="group">
      <button class="drop" disabled aria-label="圆弧"><svg><use href="#arc"/><use href="#py"/></svg></button>
      <button class="drop" disabled aria-label="圆"><svg><use href="#circ"/><use href="#py"/></svg></button>
      <button class="drop" disabled aria-label="椭圆"><svg><use href="#ell"/><use href="#py"/></svg></button>
      <button class="drop" disabled aria-label="矩形"><svg><use href="#rct"/><use href="#py"/></svg></button>
      <button class="drop" disabled aria-label="多边形"><svg><use href="#poly"/><use href="#py"/></svg></button>
    </div>
    <div class="group">
      <button class="drop" aria-label="选择要素"><svg><use href="#sel"/><use href="#cur"/></svg></button>
      <button class="drop" aria-label="按值选择"><svg><use href="#selv"/></svg></button>
      <button class="drop" aria-label="取消选择"><svg><use href="#desel"/></svg></button>
      <button aria-label="按位置选择"><svg><use href="#selloc"/></svg></button>
    </div>
    <div class="group">
      <input class="geocode" type="text" placeholder="MapTiler Geoco⋯" aria-label="MapTiler">
    </div>
    <div class="group">
      <button disabled aria-label="网孔数字化"><svg><use href="#form"/></svg></button>
      <button class="drop" disabled aria-label="选择网孔"><svg><use href="#wide"/></svg></button>
      <button disabled aria-label="变换网孔"><svg><use href="#rows"/></svg></button>
      <button class="drop" disabled aria-label="重塑网孔"><svg><use href="#vsq"/></svg></button>
    </div>
    <div class="group">
      <button class="drop" aria-label="注记图层"><svg><use href="#annoA"/><use href="#py"/></svg></button>
      <button aria-label="选择注记"><svg><use href="#sela"/></svg></button>
      <button aria-label="多边形注记"><svg><use href="#apoly"/><use href="#pg"/></svg></button>
      <button aria-label="线注记"><svg><use href="#aline"/><use href="#pg"/></svg></button>
      <button aria-label="点注记"><svg><use href="#star"/><use href="#pg"/></svg></button>
      <button aria-label="文字注记"><svg><use href="#tee"/><use href="#pg"/></svg></button>
      <span class="sep"></span>
      <button class="drop" aria-label="文本框"><svg><use href="#tbox"/></svg></button>
    </div>
    <div class="group">
      <button aria-label="要素比较"><svg><use href="#redblue"/></svg></button>
      <button aria-label="绿色图层"><svg><use href="#green"/></svg></button>
      <span class="sep"></span>
    </div>
    <div class="group"></div>
  </div>

  <div class="work">
    <nav class="side">
      <button aria-label="矢量图层"><svg><use href="#vec"/><use href="#pg"/></svg></button>
      <button aria-label="栅格图层"><svg><use href="#raster"/><use href="#pg"/></svg></button>
      <button aria-label="网孔图层"><svg><use href="#mesh"/><use href="#pg"/></svg></button>
      <button aria-label="分隔文本"><svg><use href="#comma"/><use href="#pg"/></svg></button>
      <button aria-label="SpatiaLite"><svg><use href="#feather"/><use href="#pg"/></svg></button>
      <button aria-label="虚拟图层"><svg><use href="#vsq"/><use href="#pg"/></svg></button>
      <button class="drop" aria-label="PostGIS"><svg><use href="#pg-db"/><use href="#pg"/></svg></button>
      <button aria-label="WMS"><svg><use href="#globe"/><use href="#pg"/></svg></button>
      <button aria-label="WCS"><svg><use href="#globeg"/><use href="#pg"/></svg></button>
      <button aria-label="WFS"><svg><use href="#globev"/><use href="#pg"/></svg></button>
      <button class="drop" aria-label="临时图层"><svg><use href="#chip"/><use href="#py"/></svg></button>
    </nav>

    <aside class="dock left">
      <section class="panel">
        <header class="head"><h2>浏览器</h2><button aria-label="浮动"><svg><use href="#float"/></svg></button><button aria-label="关闭"><svg><use href="#close"/></svg></button></header>
        <div class="tools">
          <button aria-label="添加"><svg><use href="#sq"/><use href="#pg"/></svg></button>
          <button aria-label="刷新"><svg><use href="#refresh"/></svg></button>
          <button aria-label="过滤"><svg><use href="#funnel"/></svg></button>
          <button aria-label="折叠"><svg><use href="#updn"/></svg></button>
          <button aria-label="属性"><svg><use href="#info"/></svg></button>
        </div>
        <div class="browser">
          <ul class="tree">
            <li class="leaf"><svg><use href="#star"/></svg>收藏夹</li>
            <li><svg><use href="#bms"/></svg>空间书签</li>
            <li><svg><use href="#home"/></svg>主目录</li>
            <li><svg><use href="#fold"/></svg>C:\ (系统磁盘)</li>
            <li><svg><use href="#fold"/></svg>D:\ (高速硬盘)</li>
            <li><svg><use href="#fold"/></svg>E:\ (数据存储)</li>
          </ul>
          <div class="scroll"><i class="up"></i><b></b><i class="down"></i></div>
        </div>
      </section>
      <section class="panel grow">
        <header class="head"><h2>图层</h2><button aria-label="浮动"><svg><use href="#float"/></svg></button><button aria-label="关闭"><svg><use href="#close"/></svg></button></header>
        <div class="tools">
          <button aria-label="样式"><svg><use href="#brush"/></svg></button>
          <button aria-label="添加组"><svg><use href="#group"/></svg></button>
          <button aria-label="可见性"><svg><use href="#eye"/><use href="#dd"/></svg></button>
          <button aria-label="过滤"><svg><use href="#funnel"/><use href="#dd"/></svg></button>
          <button class="drop" aria-label="表达式过滤"><svg><use href="#eps"/></svg></button>
          <button aria-label="展开"><svg><use href="#dnup"/></svg></button>
          <button aria-label="折叠"><svg><use href="#updn"/></svg></button>
          <button aria-label="移除"><svg><use href="#sq"/><use href="#xr"/></svg></button>
        </div>
        <div class="layers">
          <label><input type="checkbox" checked><span class="swatch line"></span>back_line</label>
          <label class="current"><input type="checkbox" checked><span class="swatch fill"></span><u>back</u></label>
        </div>
      </section>
      <section class="panel vertex">
        <header class="head"><h2>顶点编辑器</h2><button aria-label="浮动"><svg><use href="#float"/></svg></button><button aria-label="关闭"><svg><use href="#close"/></svg></button></header>
        <button class="burger" aria-label="菜单"><svg><use href="#burger"/></svg></button>
        <p>右键单击可编辑要素以显示其顶点表。</p>
        <p>当一个要素选中到该面板时，在画布上拖动绘制矩形仅会选中该要素的顶点。</p>
      </section>
    </aside>

    <section class="canvas">
      <svg viewBox="167 108 536 330" role="img" aria-label="back">
        <path class="ground" d="M182.500 184.500H223V173.500H257.500V184.500H296V192.500H303.500V181.500H690.500V239.500H685.500V246.500H693V259.500H684V310.500H303.500V292H296V300H257V304H224V300H182.500Z"/>
        <!-- hall -->
        <g class="thick">
          <path d="M223 198.500H196.500V286.500H230M251 286.500H310M257 198.500H310M223.500 200.500V189.500H229M251.500 189.500H257.500V200.500M223.500 200.500H230M251 200.500H257.500"/>
        </g>
        <g class="thin">
          <path d="M229.500 190V186.500H251.500V190M230 200.500H251M293.500 184.500V202.500H295.500V184.500M293.500 300V282.500H295.500V300"/>
          <path d="M272.500 225.500H281.500V235.500H286.500V249.500H281.500V259.500H272.500V249.500A7.500 7.500 0 0 1 272.500 235.500Z"/>
          <path d="M293.500 219.500h2v45h-2zM295.500 221.500h11v42h-11zM308.500 219.500V264.500M309.500 221V263M311.500 219.500V264.500M300 219.500H312M300 264.500H312M305.500 219.500h3v3h-3zM305.500 262.500h3v3h-3zM305.500 198.500h3v3h-3zM305.500 283.500h3v3h-3z"/>
        </g>
        <!-- outer walls -->
        <g class="thin">
          <path d="M305.500 187.500H685.500V239M305.500 189.500H307M309 189.500H683.500V237M308.500 188V202H311V189.500M309.500 283V305.500H677.500M311.500 283V303.500H675.500M677.500 259.500V305.500M675.500 281V303.500"/>
          <path d="M677.500 238.500h8M677.500 238.500V248M677.500 247.500H693M677.500 259.500H693M677.500 247.500V260M311.500 293.500h-2v4h2"/>
        </g>
        <!-- upper rooms -->
        <g class="wall">
          <path d="M352.500 189V221M373 189V221M394 189V221M414.500 189V221M435 189V221M456 189V221M476.500 189V221M518 189V221M560 189V221M580.500 189V221M601 189V221M643.500 189V221M664 189V212M332 189V201"/>
          <path d="M326 202V222M326 221.500H334M342 221.500H354M360 221.500H385M390 221.500H397M402 221.500H427M431 221.500H439M443 221.500H468M472 221.500H480M485 221.500H510M514 221.500H522M526 221.500H551M556 221.500H564M568 221.500H593M597 221.500H605M609 221.500H634M639 221.500H645"/>
          <path d="M326 264V283M326 263.500H383M394 263.500H466M477 263.500H549M560 263.500H632M639 263.500H646"/>
        </g>
        <g class="thick">
          <path d="M340.500 189V212.500H326M340.500 205.500H352M310 201.500H333M644 212.500H664M657.500 212V220M310 283.500H316M320 283.500H327"/>
        </g>
        <g class="thin">
          <path d="M656.500 220.500H684M658.500 222V238.500H684M650.500 263.500H677V262.500H651M652.500 264V279.500H677M643.500 280.500H677M650.500 264V280.500M383 263.500H394M466 263.500H477M549 263.500H560M632 263.500H639"/>
        </g>
        <!-- middle rooms -->
        <g class="wall">
          <path d="M352 232.500H384M392 232.500H467M475 232.500H550M558 232.500H632"/>
          <path d="M382.500 240V262M393 233V262M465.500 240V262M476 233V262M548.500 240V262M559 233V262M631.500 240V262"/>
        </g>
        <g class="thin">
          <path d="M353.500 233V262M381.500 233V241M436.500 233V262M435.500 240V262M464.500 233V241M519.500 233V262M518.500 240V262M547.500 233V241M602.500 233V262M601.500 240V262M630.500 233V241M352.500 240V262"/>
        </g>
        <!-- lower rooms -->
        <g class="wall"><path d="M352.500 266V303M394 266V303M435.500 266V303M477 266V303M518.500 266V303M560 266V303M601.500 266V303M643 266V303"/></g>
        <g class="post">
          <path d="M351 262.500h3v3h-3zM392.500 262.500h3v3h-3zM434 262.500h3v3h-3zM475.500 262.500h3v3h-3zM517 262.500h3v3h-3zM558.500 262.500h3v3h-3zM600 262.500h3v3h-3zM641.500 262.500h3v3h-3z"/>
          <path d="M351 295h3v3h-3zM392.500 295h3v3h-3zM434 295h3v3h-3zM475.500 295h3v3h-3zM517 295h3v3h-3zM558.500 295h3v3h-3zM600 295h3v3h-3zM641.500 295h3v3h-3z"/>
        </g>
      </svg>
    </section>

    <aside class="dock right">
      <header class="head"><h2>工具箱</h2><button aria-label="浮动"><svg><use href="#float"/></svg></button><button aria-label="关闭"><svg><use href="#close"/></svg></button></header>
      <div class="tools">
        <button aria-label="模型"><svg><use href="#models"/><use href="#dd"/></svg></button>
        <button aria-label="脚本"><svg><use href="#python"/><use href="#dd"/></svg></button>
        <button aria-label="历史"><svg><use href="#clock"/></svg></button>
        <button disabled aria-label="结果"><svg><use href="#report"/></svg></button>
        <span class="sep"></span>
        <button aria-label="就地编辑"><svg><use href="#note"/></svg></button>
        <span class="sep"></span>
        <button aria-label="选项"><svg><use href="#wrench"/></svg></button>
      </div>
      <label class="find"><svg><use href="#mag"/></svg><input type="text" placeholder="搜索…" aria-label="搜索算法"></label>
      <ul class="tree">
        <li><svg><use href="#clock"/></svg>最近用过</li>
        <li><svg><use href="#q"/></svg>插值</li>
        <li><svg><use href="#q"/></svg>矢量创建</li>
        <li><svg><use href="#q"/></svg>矢量叠加</li>
        <li><svg><use href="#q"/></svg>矢量分析</li>
        <li><svg><use href="#q"/></svg>矢量几何图形</li>
        <li><svg><use href="#q"/></svg>矢量属性表</li>
        <li><svg><use href="#q"/></svg>矢量通用</li>
        <li><svg><use href="#q"/></svg>矢量瓦片</li>
        <li><svg><use href="#q"/></svg>矢量选择</li>
        <li><svg><use href="#q"/></svg>图表</li>
        <li><svg><use href="#q"/></svg>图层工具</li>
        <li><svg><use href="#q"/></svg>网孔</li>
        <li><svg><use href="#q"/></svg>网络分析</li>
        <li><svg><use href="#q"/></svg>文件工具</li>
        <li><svg><use href="#q"/></svg>栅格创建</li>
        <li><svg><use href="#q"/></svg>栅格地形分析</li>
        <li><svg><use href="#q"/></svg>栅格分析</li>
        <li><svg><use href="#q"/></svg>栅格工具</li>
        <li><svg><use href="#q"/></svg>制图</li>
        <li><svg><use href="#q"/></svg>Database</li>
        <li><svg><use href="#q"/></svg>GPS</li>
        <li><svg><use href="#gdal"/></svg>GDAL</li>
        <li><svg><use href="#grass"/></svg>GRASS</li>
        <li><svg><use href="#saga"/></svg>SAGA</li>
      </ul>
    </aside>
  </div>

  <footer class="status">
    <label class="find locator"><svg><use href="#mag"/></svg><input type="text" placeholder="搜索 (Ctrl+K)" aria-label="定位搜索"></label>
    <label for="coord">坐标</label><input id="coord" class="box" type="text" value="0.3780, 0.6028">
    <button aria-label="范围"><svg><use href="#extent"/></svg></button>
    <label for="scale">比例</label><span class="combo"><select id="scale"><option>1:315698</option></select></span>
    <button aria-label="锁定比例"><svg><use href="#lock"/></svg></button>
    <label for="zoom">放大镜</label><span class="spin"><input id="zoom" type="text" value="100%"><svg><use href="#updown"/></svg></span>
    <label for="rot-angle">旋转角度</label><span class="spin"><input id="rot-angle" type="text" value="0.0°"><svg><use href="#updown"/></svg></span>
    <label class="render"><input type="checkbox" checked>渲染</label>
    <button class="crs"><svg><use href="#crs"/></svg>EPSG:4326</button>
    <button class="msg" aria-label="消息"><svg><use href="#chat"/></svg></button>
  </footer>
</main>
</body>
</html>
```

FILE: styles.css
```css
* { box-sizing: border-box; }

body {
  margin: 0;
  height: 100vh;
  display: flex;
  padding: 0 4px 4px;
  font: 6px/10px "Noto Sans", "Noto Sans CJK SC", sans-serif;
  color: #111;
  background:
    linear-gradient(90deg, #4a4650 0 290px, #d9d9d9 290px 430px, #e4e4e4 430px) bottom / 100% 4px no-repeat,
    linear-gradient(#44699b 0 147px, #d8d8da 147px) right / 4px 100% no-repeat,
    linear-gradient(#4d79a8, #557aa2 90px, #56688a 130px, #7b6f80 220px, #8c7680 270px, #45505c 330px, #3a3e47) left / 4px 100% no-repeat;
}

.defs { position: absolute; width: 0; height: 0; }
ul, p, h1, h2 { margin: 0; padding: 0; font-size: inherit; font-weight: 500; }
ul { list-style: none; }

button, input, select {
  margin: 0;
  padding: 0;
  border: 0;
  background: none;
  font: inherit;
  color: inherit;
  outline: none;
}
button { display: flex; align-items: center; justify-content: center; flex: none; }
svg { flex: none; display: block; width: 13px; height: 13px; }

.window {
  flex: 1;
  min-width: 0;
  display: flex;
  flex-direction: column;
  background: #f0f0f0;
  box-shadow: 0 1px #8a8a8a;
}

/* title and menus */
.titlebar {
  height: 16px;
  flex: none;
  display: flex;
  align-items: center;
  gap: 4px;
  padding-left: 4px;
  background: #4b4a48;
  color: #f2f2f2;
}
.titlebar .logo { width: 8px; height: 8px; }
.titlebar h1 { flex: 1; font-weight: 400; }
.winbtns { display: flex; }
.winbtns button { width: 24px; height: 16px; }
.winbtns svg { width: 7px; height: 7px; fill: none; stroke: #fff; }

.menubar {
  height: 12px;
  flex: none;
  display: flex;
  align-items: center;
  gap: 8px;
  padding-left: 5px;
  background: #f4f4f4;
}
u { text-decoration-thickness: 1px; text-underline-offset: 1px; }

/* toolbars */
.toolbar {
  height: 20px;
  flex: none;
  display: flex;
  align-items: center;
  background: linear-gradient(#fafafa, #f0f0f0);
  border-bottom: 1px solid #d2d2d2;
}
.group { display: flex; align-items: center; height: 17px; }
.group + .group { margin-left: 2px; }
.group + .apart { margin-left: 23px; }
.group::before {
  content: "";
  width: 3px;
  height: 11px;
  margin: 0 2px;
  background: repeating-linear-gradient(#dcdcdc 0 1px, transparent 1px 2px);
}
.group button { width: 17px; height: 17px; }
.group button.on { background: #dcdcdc; border: 1px solid #b4b4b4; border-radius: 2px; }
.group button.drop { width: 23px; }
.drop::after {
  content: "";
  margin-left: 1px;
  border: 2px solid transparent;
  border-top: 2px solid #555;
  border-bottom: 0;
}
button:disabled svg { filter: grayscale(1); opacity: .38; }
.sep { width: 1px; height: 12px; margin: 0 1px 0 2px; background: #d8d8d8; }

.spin, .combo, .box, .find, .geocode {
  display: flex;
  align-items: center;
  height: 11px;
  background: #fff;
  border: 1px solid #bdbdbd;
  border-radius: 1px;
}
.spin input, .combo select, .find input { flex: 1; width: 0; min-width: 0; height: 9px; padding-left: 2px; }
.spin input, .box, .combo select { font-family: "DejaVu Sans Mono", "Noto Sans CJK SC", monospace; font-size: 5px; }
.spin svg { width: 5px; height: 9px; margin: 0 1px; }
.combo select { appearance: none; }
.combo::after { content: ""; margin: 0 3px; border: 2px solid transparent; border-top: 2px solid #555; border-bottom: 0; }
.dim { background: #f0f0f0; color: #777; }
.tol { width: 46px; }
.unit { width: 33px; margin: 0 1px; }
.unit select { font-size: 6px; }
.geocode { width: 56px; padding-left: 1px; font: 6px/9px "Liberation Mono", monospace; border-radius: 2px; }
::placeholder { color: #666; opacity: 1; }

/* work area */
.work { flex: 1; min-height: 0; display: flex; }
.side { width: 27px; flex: none; padding: 6px 0 0 4px; background: linear-gradient(90deg, #fbfbfb, #ececec); border-right: 1px solid #d2d2d2; }
.side button { height: 16px; }
.side button:nth-child(odd) { margin-bottom: 1px; }
.side .drop::after { margin-left: 3px; }
.side svg { width: 13px; height: 13px; }

.dock { display: flex; flex-direction: column; flex: none; }
.left { width: 132px; margin-right: 3px; }
.right { width: 108px; margin-left: 3px; }
.head { display: flex; align-items: center; gap: 1px; height: 10px; padding: 0 1px 0 2px; flex: none; }
.head h2 { flex: 1; }
.head svg { width: 6px; height: 6px; }
.tools { display: flex; align-items: center; height: 16px; flex: none; padding-left: 2px; }
.tools button { width: 13px; height: 13px; }
.tools .drop { width: 18px; }
.tools svg { width: 9px; height: 9px; }

.browser { display: flex; height: 56px; background: #fff; border: 1px solid #c4c4c4; overflow: hidden; }
.browser .tree { flex: 1; }
.browser .tree li { gap: 2px; }
.tree li { display: flex; align-items: center; gap: 3px; height: 10px; }
.tree li:nth-child(5n) { height: 9px; }
.tree svg { width: 9px; height: 9px; }
.tree li::before { content: ""; width: 2px; margin: 0 2px 0 4px; border: 2px solid transparent; border-left: 2px solid #333; border-right: 0; }
.tree .leaf::before { border-color: transparent; }
.scroll { width: 8px; display: flex; flex-direction: column; align-items: center; background: #dadada; border-left: 1px solid #c4c4c4; }
.scroll i { width: 7px; height: 7px; background: #fafafa; display: flex; }
.scroll i::before { content: ""; margin: auto; border: 2px solid transparent; }
.scroll .up::before { border-bottom: 2px solid #444; border-top: 0; }
.scroll .down::before { border-top: 2px solid #444; border-bottom: 0; }
.scroll b { width: 7px; height: 14px; margin-bottom: auto; background: #fafafa; border: 1px solid #cfcfcf; }

.panel { display: flex; flex-direction: column; flex: none; }
.grow { flex: 1; min-height: 0; padding-top: 3px; }
.layers { flex: 1; background: #fff; border: 1px solid #c4c4c4; }
.layers label { display: flex; align-items: center; height: 10px; padding-left: 11px; font-weight: 700; }
.layers .current { background: #f0f0f0; }
.swatch { width: 8px; margin: 0 3px 0 4px; }
.swatch.line { height: 1px; background: #f0b4bc; }
.swatch.fill { height: 8px; background: #82d67f; border: 1px solid #6f9a6e; }

input[type="checkbox"] {
  appearance: none;
  width: 7px;
  height: 7px;
  flex: none;
  background: #fff;
  border: 1px solid #bbb;
  display: grid;
  place-items: center;
}
input[type="checkbox"]:checked::before {
  content: "";
  width: 3px;
  height: 5px;
  border: solid #111;
  border-width: 0 1px 1px 0;
  transform: rotate(40deg);
}

.vertex { height: 74px; padding-top: 3px; }
.vertex p { padding: 0 4px 0 5px; line-height: 8px; }
.vertex p + p { margin-top: 6px; }
.burger { align-self: flex-end; width: 12px; height: 12px; margin: 0 1px 12px 0; background: #fafafa; border: 1px solid #b4b4b4; border-radius: 2px; }
.burger svg { width: 9px; height: 9px; }

/* map */
.canvas { flex: 1; min-width: 0; background: #fff; border: 1px solid #d2d2d2; border-top: 0; }
.canvas svg { width: 100%; height: 100%; fill: none; }
.ground { fill: #82d67f; stroke: #8d6f6a; stroke-width: 1.6; }
.thick { stroke: #2c4a2c; stroke-width: 1.2; }
.thin { stroke: #3f6b3e; stroke-width: 1; }
.wall { stroke: #4f7d4d; stroke-width: 2; }
.post { fill: #82d67f; stroke: #33552f; stroke-width: 1; }

/* toolbox */
.right .tools { padding-left: 3px; }
.find svg { width: 7px; height: 7px; margin-left: 4px; }
.right .find { height: 12px; border-radius: 0; flex: none; }
.right .tree { flex: 1; background: #fff; border: 1px solid #c4c4c4; border-top: 0; }

/* status bar */
.status { height: 15px; flex: none; display: flex; align-items: center; gap: 3px; padding: 0 3px; }
.status .locator { width: 103px; margin-right: auto; border-radius: 2px; font-family: "DejaVu Sans", "Noto Sans CJK SC", sans-serif; }
.status .box { width: 47px; padding-left: 2px; }
.status .combo { width: 43px; }
.status .spin { width: 46px; }
.status button svg { width: 9px; height: 9px; }
.render { display: flex; align-items: center; gap: 3px; margin-left: 3px; }
.crs { gap: 1px; margin-left: 3px; font-family: "DejaVu Sans Mono", monospace; font-size: 5px; }
.msg { margin: 0 12px; }
```
